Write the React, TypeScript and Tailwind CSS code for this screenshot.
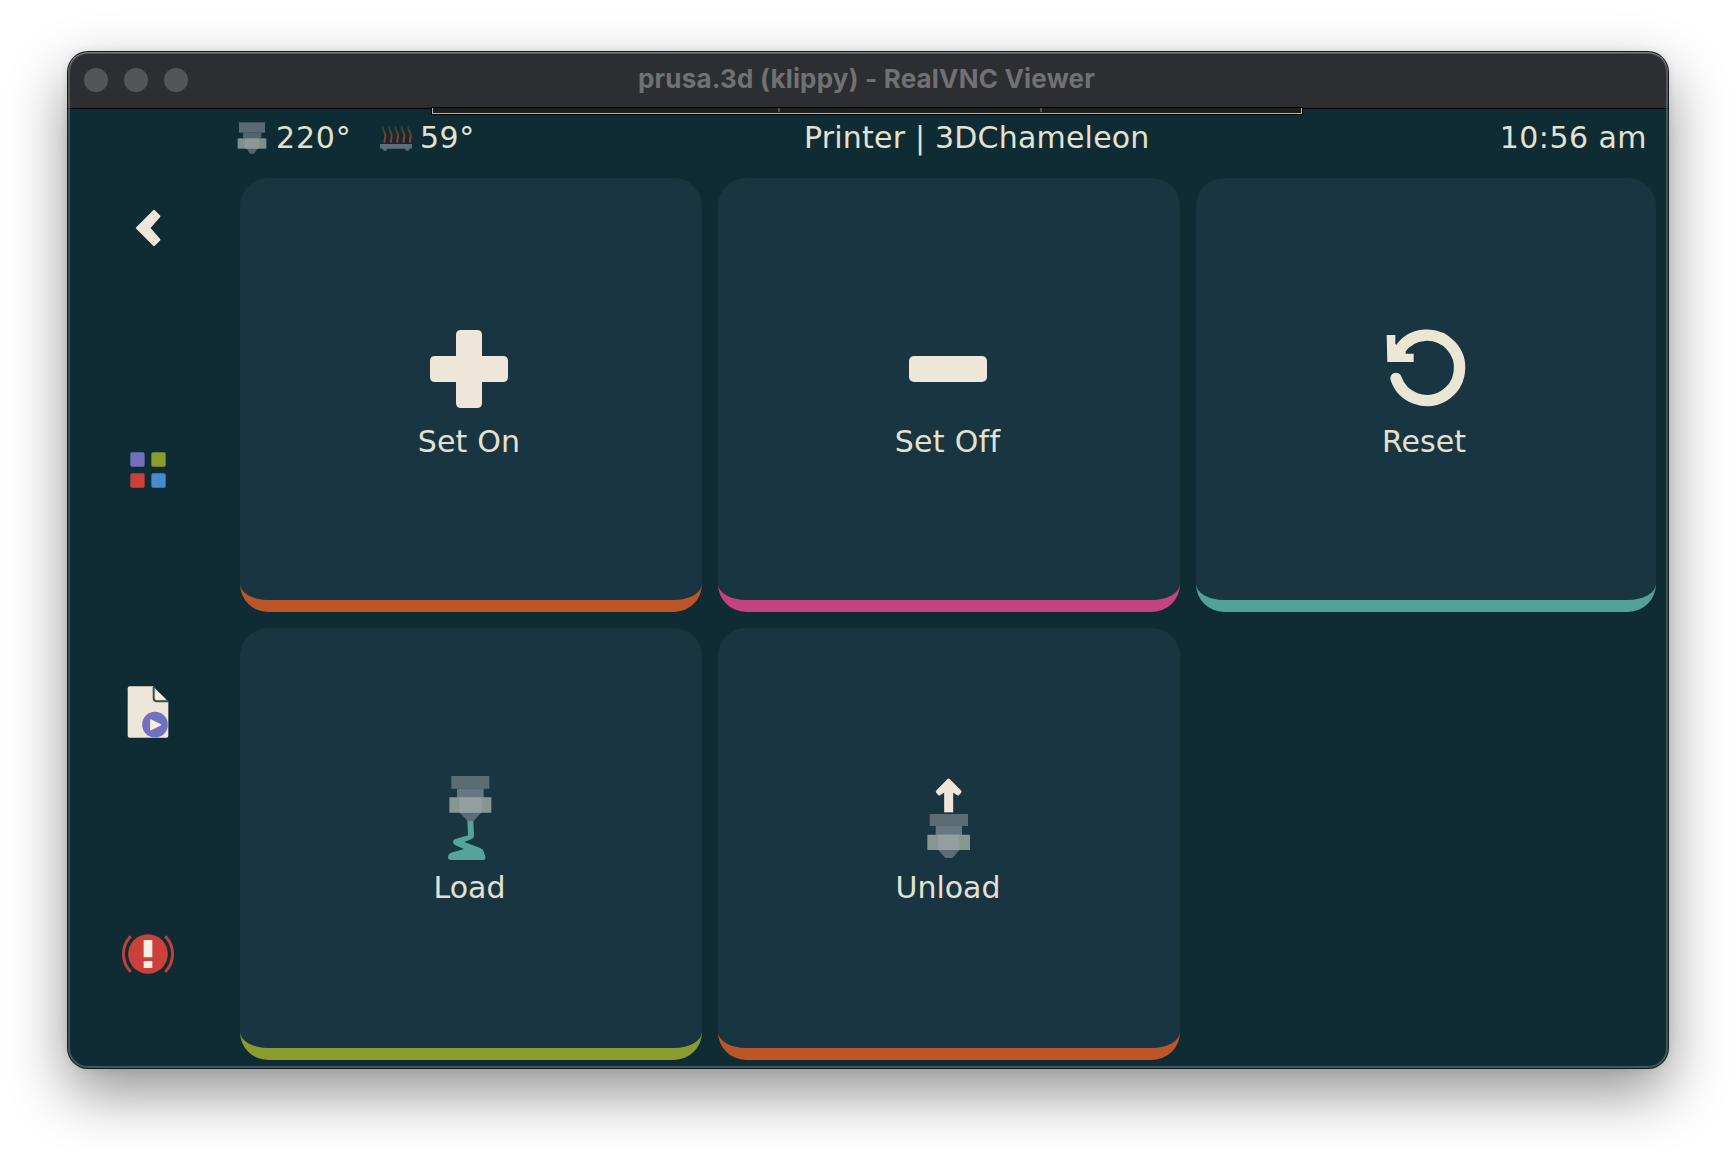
import type { ReactNode } from "react";

const CREAM = "#ede6d9";

function HeaderNozzle() {
  return (
    <svg className="h-[36px] w-[32px] shrink-0" viewBox="558 240 96 108">
      <path d="M567 247h78v31h-78z" fill="#5a6b74" />
      <path d="M579 278h55v17h-55z" fill="#51646e" />
      <path d="M590 325h33l-9 14q-9 6-16 0z" fill="#526570" />
      <path d="M563 295h86v31h-86z" fill="#7f918f" />
      <path d="M585 295h42v31h-42z" fill="#8b9898" />
    </svg>
  );
}

function HeaderBed() {
  return (
    <svg className="h-[36px] w-[34px] shrink-0" viewBox="987 240 102 108">
      <defs>
        <linearGradient id="steam" gradientUnits="userSpaceOnUse" x1="0" y1="257" x2="0" y2="308">
          <stop offset="0" stopColor="#23402f" />
          <stop offset="0.45" stopColor="#5c452a" />
          <stop offset="0.75" stopColor="#98382a" />
          <stop offset="1" stopColor="#a03527" />
        </linearGradient>
      </defs>
      {[999, 1018, 1037, 1056, 1075].map((x) => (
        <path
          key={x}
          d={`M${x} 258c-4 12 8 17 7 28c0 9-3 13-2 22`}
          fill="none"
          stroke="url(#steam)"
          strokeWidth="6"
        />
      ))}
      <path d="M990 312h96v9q0 5-5 5h-2l-3 6h-8l-3-6h-53l-3 6h-8l-3-6h-3q-5 0-5-5z" fill="#5c6e77" />
    </svg>
  );
}

function BackIcon() {
  return (
    <svg className="size-[60px]" viewBox="204 474 180 180">
      <path d="M312 513 328 529 297 564 328 599 312 615 261 564z" fill={CREAM} stroke={CREAM} strokeWidth="7" strokeLinejoin="round" />
    </svg>
  );
}

function GridIcon() {
  return (
    <svg className="size-[60px]" viewBox="24 0 180 180">
      <rect x="61" y="37" width="43" height="43" rx="5" fill="#716fbe" />
      <rect x="124" y="37" width="43" height="43" rx="5" fill="#8b9b2e" />
      <rect x="61" y="100" width="43" height="43" rx="5" fill="#cb4139" />
      <rect x="124" y="100" width="43" height="43" rx="5" fill="#468bce" />
    </svg>
  );
}

function FileIcon() {
  return (
    <svg className="size-[60px]" viewBox="24 725 180 180">
      <path d="M59 738h70l46 46v102q0 6-6 6H59q-6 0-6-6V744q0-6 6-6z" fill={CREAM} />
      <path d="M131 740v33q0 10 10 10h33" fill="none" stroke="#36504f" strokeWidth="6" />
      <path d="M137 748v29h31z" fill="#f8f0e2" />
      <circle cx="135" cy="853" r="38.5" fill="#7270c0" />
      <path d="M122 838v31l31-15.500z" fill="#f8f0e2" stroke="#f8f0e2" strokeWidth="3" strokeLinejoin="round" />
    </svg>
  );
}

function AlertIcon() {
  return (
    <svg className="size-[60px]" viewBox="174 12 180 180">
      <circle cx="264" cy="102" r="59.500" fill="#cb4139" />
      <path d="M210 51a76 76 0 0 0 0 102M318 51a76 76 0 0 1 0 102" fill="none" stroke="#c03f39" strokeWidth="9" strokeLinecap="round" />
      <path d="M251 60h26v52h-26zM251 123h26v21h-26z" fill="#f8efe0" />
    </svg>
  );
}

function PlusIcon() {
  return (
    <svg className="size-[90px]" viewBox="72 72 270 270">
      <path
        d="M183 90h48q15 0 15 15v63h63q15 0 15 15v48q0 15-15 15h-63v63q0 15-15 15h-48q-15 0-15-15v-63h-63q-15 0-15-15v-48q0-15 15-15h63v-63q0-15 15-15z"
        fill={CREAM}
      />
    </svg>
  );
}

function MinusIcon() {
  return (
    <svg className="size-[90px]" viewBox="66 72 270 270">
      <rect x="84" y="168" width="234" height="78" rx="15" fill={CREAM} />
    </svg>
  );
}

function ResetIcon() {
  return (
    <svg className="size-[90px]" viewBox="87 72 270 270">
      <path d="M138 235A98 98 0 1 0 150 148" fill="none" stroke="#eae6d3" strokeWidth="34" strokeLinecap="round" />
      <path d="M110 105h26v27l31 23v6h24v25h-79z" fill={CREAM} />
    </svg>
  );
}

function LoadIcon() {
  return (
    <svg className="size-[90px]" viewBox="17 30 270 270">
      <path
        d="M144 180h18l2 48q0 7-7 9l-22 9 46 17q10 4 12 11l5 16q2 10-8 10H95q-9 0-9-8 0-10 9-14l39-11-26-11q-7-3-7-10 0-7 8-9l37-11z"
        fill="#54a39c"
      />
      <path d="M96 48h114v38H96z" fill="#5c6c75" />
      <path d="M113 86h80v27h-80z" fill="#667781" />
      <path d="M120 157h67l-24 26h-18z" fill="#5c6c76" />
      <path d="M90 112h126v46H90z" fill="#869793" />
      <path d="M120 112h67v46h-67z" fill="#939fa0" />
    </svg>
  );
}

function UnloadIcon() {
  return (
    <svg className="size-[90px]" viewBox="70 30 270 270">
      <path d="M207 157V76" fill="none" stroke={CREAM} strokeWidth="27" />
      <path d="M207 60 241 95 235 102 207 84 179 102 173 95z" fill={CREAM} stroke={CREAM} strokeWidth="9" strokeLinejoin="round" />
      <path d="M150 162h115v36H150z" fill="#5c6c75" />
      <path d="M168 198h79v27h-79z" fill="#667781" />
      <path d="M175 269h65l-22 25h-21z" fill="#5c6c76" />
      <path d="M143 224h128v46H143z" fill="#869793" />
      <path d="M175 224h64v46h-64z" fill="#939fa0" />
    </svg>
  );
}

function Tile({ label, icon, className }: { label: string; icon: ReactNode; className: string }) {
  return (
    <button className={`flex flex-col items-center rounded-[28px] border-b-[12px] bg-[#183541] ${className}`}>
      {icon}
      <span className="mt-[10px] leading-[36px]">{label}</span>
    </button>
  );
}

export default function App() {
  return (
    <div className="h-[1152px] w-[1736px] overflow-hidden bg-white pt-[52px] pl-[68px]">
      <div className="relative flex h-[1016px] w-[1600px] flex-col rounded-[20px] bg-[#0f2c34] shadow-[0_0_0_1px_#161a1c,0_0_8px_rgba(0,0,0,0.1),0_24px_60px_rgba(0,0,0,0.44)]">
        <div className="relative flex h-[57px] shrink-0 items-center justify-center rounded-t-[20px] border-b border-black bg-[#2d2e32]">
          <div className="absolute left-[16px] flex gap-4">
            <span className="size-6 rounded-full bg-[#545558]" />
            <span className="size-6 rounded-full bg-[#545558]" />
            <span className="size-6 rounded-full bg-[#545558]" />
          </div>
          <h1 className="mr-[3px] mb-[2px] font-['Inter'] text-[26px] font-bold leading-8 tracking-[0.19px] text-[#717175]">
            prusa.3d (klippy) - RealVNC Viewer
          </h1>
          <div className="absolute top-[55px] left-[363px] h-[8px] w-[872px] border border-black bg-[#1e1e1e]">
            <div className="flex h-[6px] border-x border-b border-[#b4b4b4]">
              <div className="h-[4px] w-[347px] border-r-2 border-[#555]" />
              <div className="h-[4px] w-[262px] border-r-2 border-[#555]" />
            </div>
          </div>
        </div>

        <div className="flex min-h-0 flex-1 font-['DejaVu_Sans'] text-[30px] text-[#e4e1d1]">
          <nav className="flex w-[160px] flex-col items-center justify-between pt-[89px] pb-[84px]">
            <BackIcon />
            <GridIcon />
            <FileIcon />
            <AlertIcon />
          </nav>

          <main className="flex flex-1 flex-col pr-3 pl-3">
            <header className="-ml-[4px] flex h-[69px] shrink-0 items-start pt-[11px] leading-[36px]">
              <HeaderNozzle />
              <span className="ml-[8px] w-[103px] tracking-[0.8px]">220°</span>
              <HeaderBed />
              <span className="ml-[7px] w-[384px] tracking-[0.5px]">59°</span>
              <span className="whitespace-nowrap tracking-[0.2px]">Printer | 3DChameleon</span>
              <span className="mr-[9px] ml-auto whitespace-nowrap tracking-[0.45px]">10:56 am</span>
            </header>
            <div className="grid grid-cols-[462px_462px_460px] grid-rows-[434px_432px] gap-4">
              <Tile label="Set On" icon={<PlusIcon />} className="border-[#bc5629] pt-[146px] pr-[4px] tracking-[0.2px]" />
              <Tile label="Set Off" icon={<MinusIcon />} className="border-[#c44383] pt-[146px] pr-[3px] tracking-[0.3px]" />
              <Tile label="Reset" icon={<ResetIcon />} className="border-[#52a19a] pt-[146px] pr-[4px]" />
              <Tile label="Load" icon={<LoadIcon />} className="border-[#8c9b2e] pt-[142px] pr-[3px]" />
              <Tile label="Unload" icon={<UnloadIcon />} className="border-[#bc5629] pt-[142px] pr-[2px]" />
            </div>
          </main>
        </div>
        <div className="pointer-events-none absolute inset-0 rounded-[20px] shadow-[inset_0_1px_0_rgba(255,255,255,0.22),inset_0_0_0_2px_rgba(255,255,255,0.2)]" />
      </div>
    </div>
  );
}
